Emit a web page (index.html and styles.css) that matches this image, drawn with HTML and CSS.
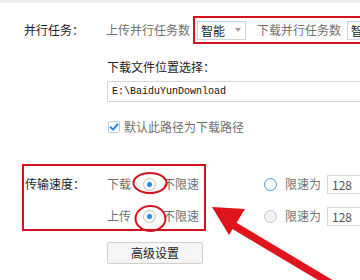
FILE: index.html
```html
<!DOCTYPE html>
<html lang="zh-CN">
<head>
<meta charset="utf-8">
<link rel="stylesheet" href="styles.css">
</head>
<body>
<div class="topbar"></div>
<div class="page">
  <div class="row r1">
    <div class="label">并行任务：</div>
    <span class="sub">上传并行任务数</span>
    <div class="redbox rb1">
      <div class="select"><span>智能</span><i class="caret"></i></div>
      <span class="sub sub2">下载并行任务数</span>
      <div class="select sel2"><span>智能</span><i class="caret"></i></div>
    </div>
  </div>

  <div class="content">
    <div class="title">下载文件位置选择：</div>
    <div class="path">E:\BaiduYunDownload</div>
    <div class="check">
      <svg class="cb" width="12" height="12" viewBox="0 0 12 12"><rect x="0.5" y="0.5" width="11" height="11" rx="1" fill="#fff" stroke="#b7cbe2"/><path d="M2.6 6.2 L5 8.6 L9.6 3.3" fill="none" stroke="#2187e0" stroke-width="2" stroke-linecap="round" stroke-linejoin="round"/></svg>
      <span class="sub">默认此路径为下载路径</span>
    </div>
  </div>

  <div class="speed">
    <div class="redbox rb2">
      <div class="label lab2">传输速度：</div>
      <div class="opts">
        <div class="opt"><span class="sub">下载</span><i class="radio on"></i><span class="sub">不限速</span></div>
        <div class="opt"><span class="sub">上传</span><i class="radio on"></i><span class="sub">不限速</span></div>
      </div>
    </div>
    <div class="limits">
      <div class="opt"><i class="radio hover"></i><span class="sub">限速为</span><div class="num">128</div></div>
      <div class="opt"><i class="radio"></i><span class="sub">限速为</span><div class="num">128</div></div>
    </div>
  </div>

  <div class="btn">高级设置</div>
</div>

<svg class="annot" width="360" height="280" viewBox="0 0 360 280">
  <ellipse cx="150" cy="183" rx="16.5" ry="10" fill="none" stroke="#d4141d" stroke-width="2"/>
  <ellipse cx="150.5" cy="218.5" rx="15" ry="12.5" fill="none" stroke="#d4141d" stroke-width="2"/>
  <line x1="228" y1="222" x2="352" y2="296" stroke="#e0141c" stroke-width="7.5"/>
  <polygon points="212,207 245,209 229,235" fill="#e0141c"/>
</svg>
</body>
</html>
```

FILE: styles.css
```css
html, body {
  margin: 0;
  padding: 0;
  background: #fff;
  overflow: hidden;
  width: 360px;
  height: 280px;
}
body {
  font-family: "Noto Sans CJK SC", "Microsoft YaHei", sans-serif;
  font-size: 12px;
  color: #333;
  position: relative;
}
.topbar {
  height: 3px;
  background: #eceef1;
}
.page {
  padding-left: 22px;
  width: 600px;
}
.row {
  display: flex;
  align-items: center;
}
.r1 {
  margin-top: 13px;
  height: 28px;
}
.label {
  width: 82px;
  padding-left: 2px;
  color: #222;
  line-height: 18px;
  flex: none;
}
.sub {
  color: #707070;
  line-height: 18px;
  white-space: nowrap;
}
.redbox {
  border: 2px solid #d3121b;
  box-sizing: border-box;
}
.rb1 {
  margin-left: 3px;
  height: 28px;
  width: 230px;
  display: flex;
  align-items: center;
  padding-left: 2px;
  flex: none;
}
.select {
  width: 49px;
  height: 19px;
  box-sizing: border-box;
  border: 1px solid #d2d2d2;
  display: flex;
  align-items: center;
  padding-left: 3px;
  color: #222;
  line-height: 17px;
  flex: none;
  position: relative;
}
.caret {
  width: 0;
  height: 0;
  border-left: 3.5px solid transparent;
  border-right: 3.5px solid transparent;
  border-top: 4px solid #a0a0a0;
  margin-left: 10px;
}
.sub2 {
  margin-left: 11px;
}
.sel2 {
  margin-left: 6px;
}
.content {
  padding-left: 85px;
  padding-top: 14px;
}
.title {
  line-height: 18px;
  color: #222;
}
.path {
  margin-top: 5px;
  height: 21px;
  width: 300px;
  box-sizing: border-box;
  border: 1px solid #d6d6d6;
  padding-left: 4px;
  font-family: "Liberation Mono", "DejaVu Sans Mono", monospace;
  font-size: 10px;
  line-height: 19px;
  color: #111;
}
.check {
  margin-top: 18px;
  display: flex;
  align-items: center;
  height: 14px;
  padding-left: 1px;
}
.cb {
  display: block;
  margin-right: 4px;
}
.speed {
  margin-top: 30px;
  display: flex;
}
.rb2 {
  width: 184px;
  height: 67px;
  display: flex;
  flex: none;
}
.lab2 {
  padding-left: 1px;
  margin-top: 9px;
}
.opts {
  display: flex;
  flex-direction: column;
  gap: 12px;
  padding-top: 8px;
}
.opt {
  display: flex;
  align-items: center;
  height: 20px;
}
.radio {
  width: 13px;
  height: 13px;
  box-sizing: border-box;
  border-radius: 50%;
  border: 1px solid #c6c6c6;
  background: #f2f2f2;
  display: block;
  flex: none;
  position: relative;
}
.opts .radio {
  margin-left: 12px;
  margin-right: 7px;
  background: #fbfbfb;
  border-color: #bdbdbd;
}
.radio.on::after {
  content: "";
  position: absolute;
  left: 3px;
  top: 3px;
  width: 5px;
  height: 5px;
  border-radius: 50%;
  background: #1f8ee8;
}
.radio.hover {
  border: 1.5px solid #3a9ce8;
  background: #fff;
}
.limits {
  margin-left: 58px;
  display: flex;
  flex-direction: column;
  gap: 12px;
  padding-top: 10px;
}
.limits .radio {
  margin-right: 8px;
}
.num {
  margin-left: 6px;
  width: 70px;
  height: 19px;
  box-sizing: border-box;
  border: 1px solid #d6d6d6;
  padding-left: 4px;
  color: #555;
  line-height: 17px;
}
.btn {
  margin-top: 11px;
  margin-left: 85px;
  width: 96px;
  height: 22px;
  box-sizing: border-box;
  border: 1px solid #cfcfcf;
  border-radius: 2px;
  background: #f5f5f5;
  text-align: center;
  line-height: 20px;
  color: #222;
}
.annot {
  position: absolute;
  left: 0;
  top: 0;
  pointer-events: none;
}
```
